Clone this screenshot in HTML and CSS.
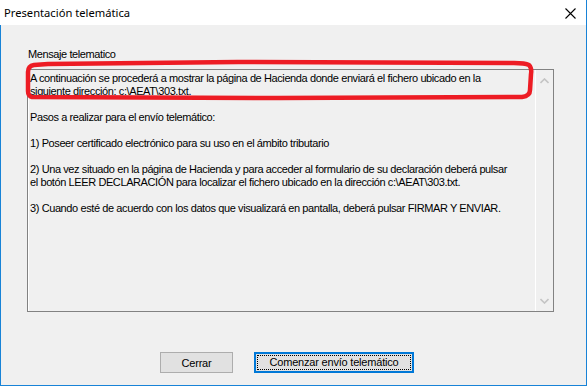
FILE: index.html
```html
<!DOCTYPE html>
<html lang="es">
<head>
    <meta charset="UTF-8">
    <title>Presentación telemática</title>
    <link rel="stylesheet" href="styles.css">
</head>
<body>

<div class="window">
    <div class="titlebar">
        <span class="title">Presentación telemática</span>
        <svg class="close" width="11" height="11" viewBox="0 0 11 11">
            <path d="M0.5 0.5 L10.5 10.5 M10.5 0.5 L0.5 10.5" stroke="#000" stroke-width="1.1" fill="none"/>
        </svg>
    </div>

    <div class="content">
        <div class="label">Mensaje telematico</div>

        <div class="msg-wrap">
            <div class="msg-box">
                <div class="msg-text">
                    <p>A continuación se procederá a mostrar la página de Hacienda donde enviará el fichero ubicado en la<br>siguiente dirección: c:\AEAT\303.txt.</p>
                    <p>Pasos a realizar para el envío telemático:</p>
                    <p>1) Poseer certificado electrónico para su uso en el ámbito tributario</p>
                    <p>2) Una vez situado en la página de Hacienda y para acceder al formulario de su declaración deberá pulsar<br>el botón LEER DECLARACIÓN para localizar el fichero ubicado en la dirección c:\AEAT\303.txt.</p>
                    <p>3) Cuando esté de acuerdo con los datos que visualizará en pantalla, deberá pulsar FIRMAR Y ENVIAR.</p>
                </div>
                <div class="scroll">
                    <svg width="9" height="6" viewBox="0 0 9 6"><path d="M0.5 5 L4.5 1 L8.5 5" stroke="#c4c4c4" stroke-width="1.6" fill="none"/></svg>
                    <svg width="9" height="6" viewBox="0 0 9 6"><path d="M0.5 1 L4.5 5 L8.5 1" stroke="#c4c4c4" stroke-width="1.6" fill="none"/></svg>
                </div>
            </div>
            <!-- marca roja dibujada a mano -->
            <svg class="mark" width="540" height="50" viewBox="0 0 540 50">
                <path d="M30 8 L220 6 L496 7 Q507 7 511 9 Q514 12 513 18 L512 34 Q512 40 504 41 L260 42 L14 41 Q10 40 10 35 L10 16 Q10 10 16 9 Z"
                      stroke="#ed1c24" stroke-width="4.5" fill="none" stroke-linejoin="round"/>
            </svg>
        </div>

        <div class="buttons">
            <button class="btn">Cerrar</button>
            <button class="btn btn-default"><span>Comenzar envío telemático</span></button>
        </div>
    </div>
</div>

</body>
</html>
```

FILE: styles.css
```css
/* Ventana */
body {
    margin: 0;
    padding: 0;
    background-color: #f0f0f0;
    font-family: 'Liberation Sans', Arial, sans-serif;
    font-size: 11px;
    color: #000;
}
.window {
    width: 586px;
    height: 385px;
    border-right: 1px solid #1883d7;
    border-bottom: 1px solid #1883d7;
    background-color: #f0f0f0;
}
.titlebar {
    height: 25px;
    background-color: #fff;
    display: flex;
    align-items: center;
    justify-content: space-between;
    padding: 0 10px 0 4px;
}
.title {
    font-family: 'Noto Sans', sans-serif;
    font-size: 11.2px;
    margin-top: -1px;
}
.close {
    margin-top: 1px;
}
.content {
    height: 360px;
    box-sizing: border-box;
    border-left: 1px solid #1883d7;
    padding: 23px 0 0 26px;
    letter-spacing: -0.4px;
}
.label {
    line-height: 13px;
    height: 13px;
    padding-left: 1px;
}
.msg-wrap {
    position: relative;
    margin-top: 8px;
}
.msg-box {
    width: 527px;
    height: 243px;
    box-sizing: border-box;
    border: 1px solid #828282;
    display: flex;
}
.msg-text {
    flex: 1;
    border-left: 1px solid #fff;
    padding: 2px 0 0 1px;
    line-height: 13px;
    white-space: nowrap;
}
.msg-text p {
    margin: 0 0 13px 0;
}
.scroll {
    width: 17px;
    border-left: 1px solid #fff;
    display: flex;
    flex-direction: column;
    justify-content: space-between;
    align-items: center;
    padding: 8px 0 7px 0;
}
.mark {
    position: absolute;
    left: -9px;
    top: -13px;
}
.buttons {
    display: flex;
    gap: 21px;
    padding-left: 133px;
    margin-top: 40px;
}
.btn {
    height: 21px;
    width: 73px;
    padding: 0;
    font-family: 'Liberation Sans', Arial, sans-serif;
    font-size: 11px;
    letter-spacing: -0.2px;
    color: #000;
    background-color: #e1e1e1;
    border: 1px solid #adadad;
}
.btn-default {
    width: 160px;
    border: 2px solid #0078d7;
    padding: 1px;
}
.btn-default span {
    display: block;
    height: 100%;
    box-sizing: border-box;
    border: 1px dotted #000;
    line-height: 13px;
}
```
